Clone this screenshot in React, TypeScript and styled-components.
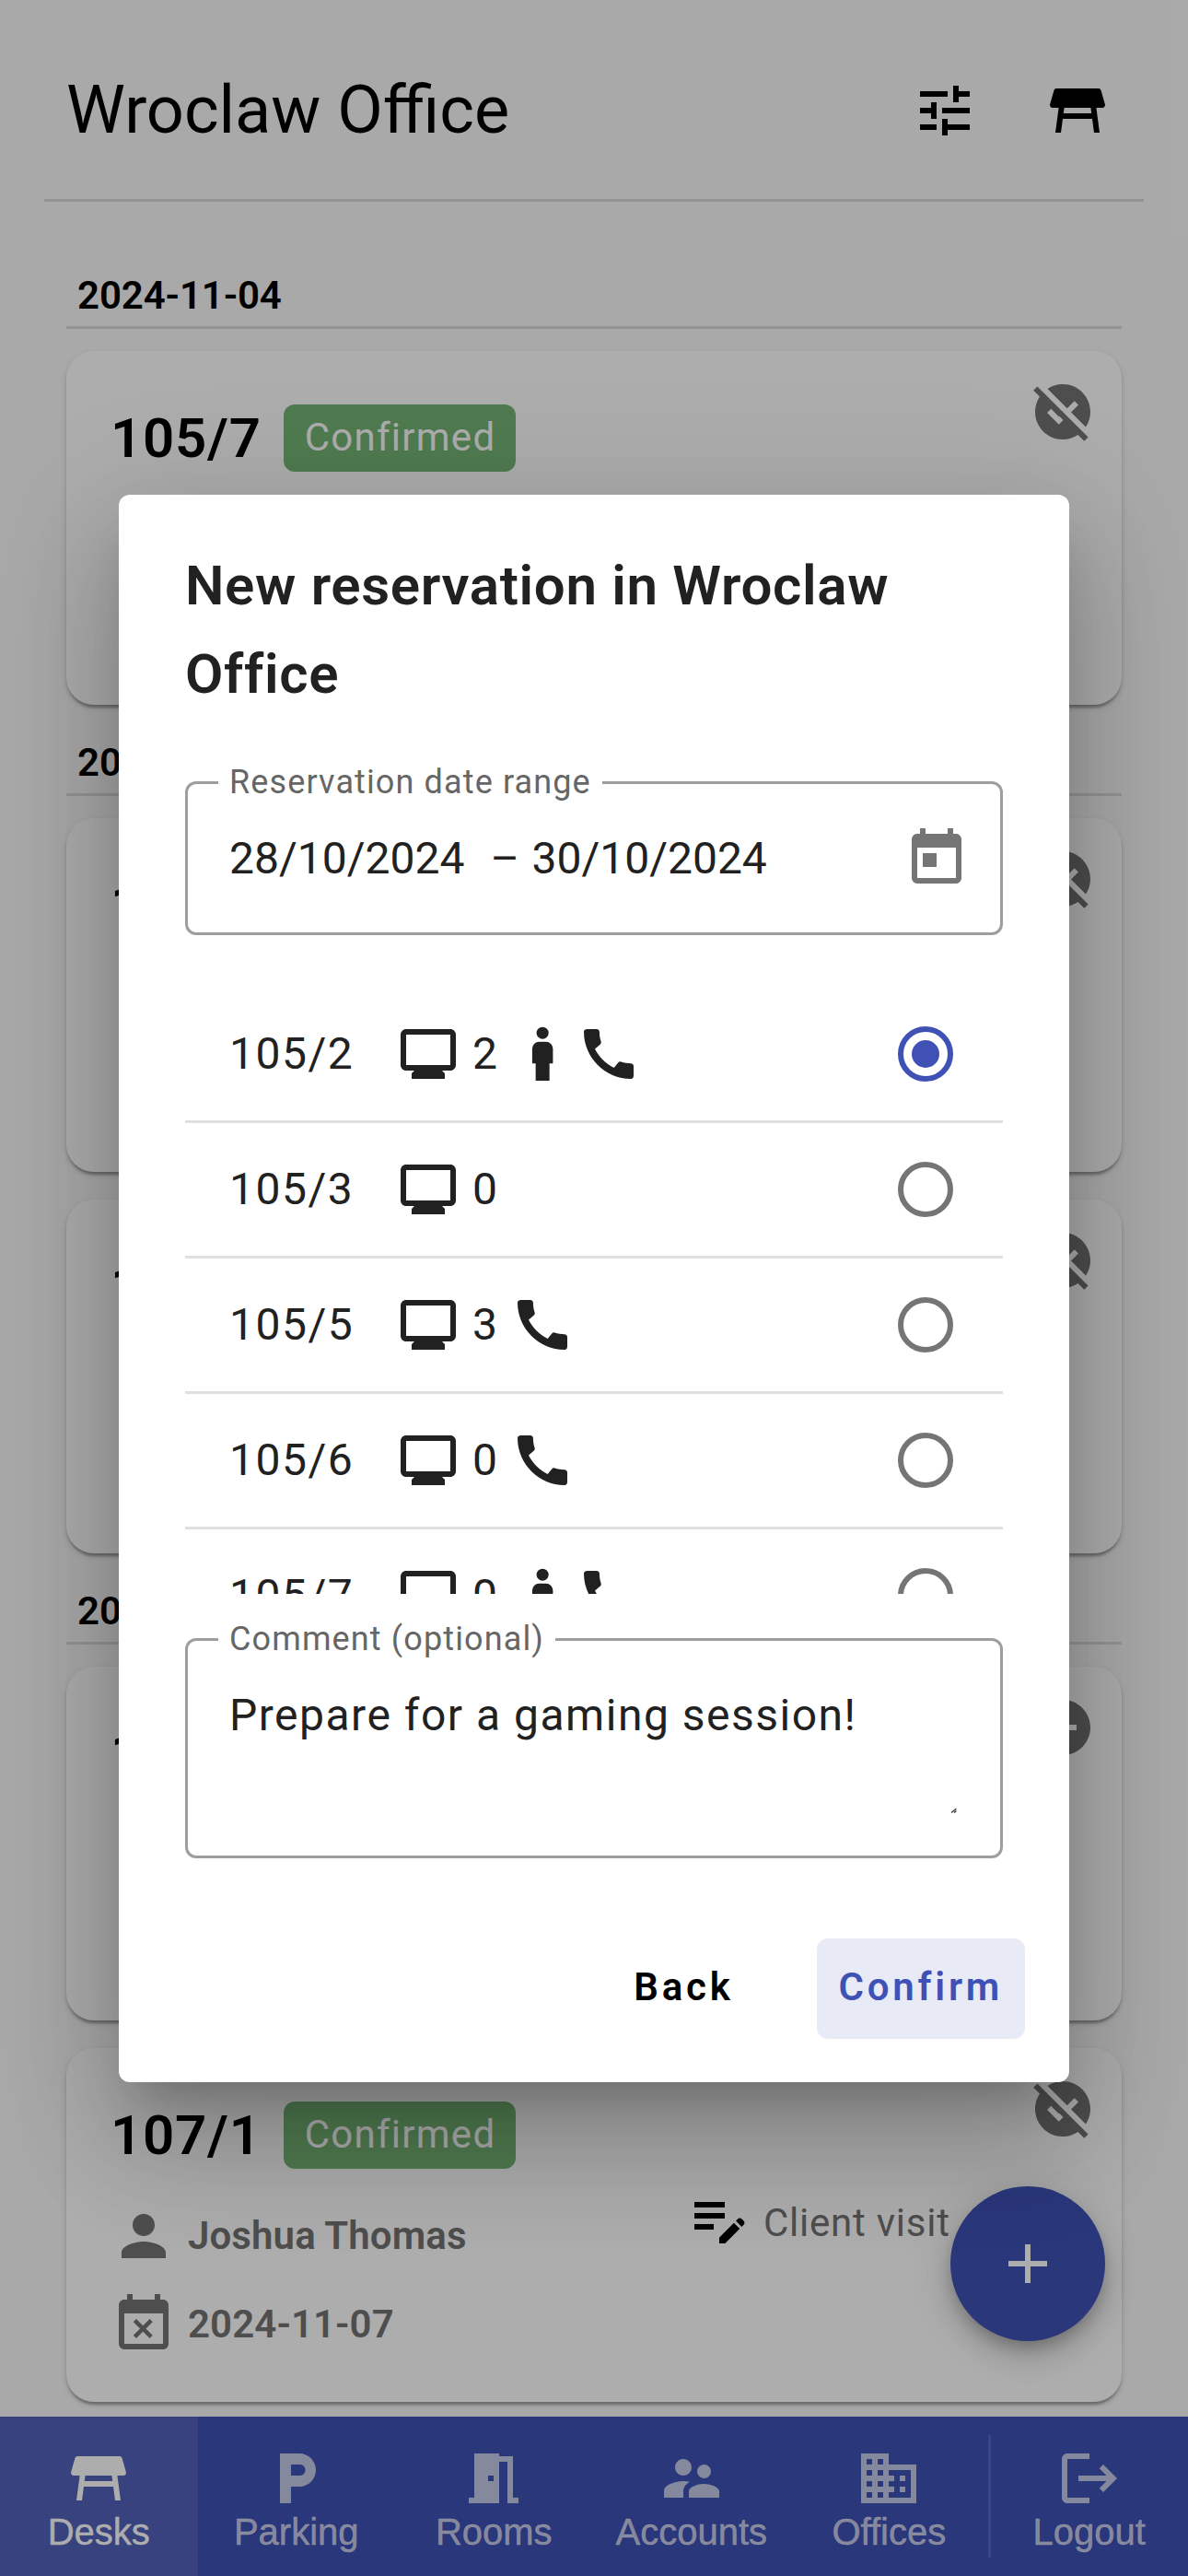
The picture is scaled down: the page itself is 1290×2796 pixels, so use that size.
import React from 'react';
import styled, { createGlobalStyle, css } from 'styled-components';
import {
  MdAdd,
  MdCall,
  MdDomain,
  MdEditNote,
  MdEventBusy,
  MdLocalParking,
  MdMeetingRoom,
  MdMonitor,
  MdPerson,
  MdRemoveCircle,
  MdSupervisorAccount,
  MdTableRestaurant,
  MdToday,
  MdTune,
  MdUnpublished,
} from 'react-icons/md';

const GlobalStyle = createGlobalStyle`
  * { box-sizing: border-box; }
  html, body { margin: 0; padding: 0; background: #fafafa; }
  body { font-family: Roboto, "Noto Sans", sans-serif; color: #000; }
  button { border: 0; background: none; padding: 0; margin: 0; color: inherit; }
  svg { display: block; flex: none; }
`;

const primary = '#3f51b5';

const Screen = styled.div`
  position: relative;
  display: flex;
  flex-direction: column;
  width: 1290px;
  height: 2796px;
  overflow: hidden;
  background: #fafafa;
`;

/* ---------- Page header ---------- */

const Header = styled.header`
  display: flex;
  align-items: center;
  flex: none;
  height: 219px;
  margin: 0 48px;
  padding: 24px 0 0 24px;
  border-bottom: 3px solid rgba(0, 0, 0, 0.12);
`;

const PageTitle = styled.h1`
  flex: 1;
  margin: 0;
  font-size: 72px;
  font-weight: 400;
  line-height: 96px;
`;

const IconButton = styled.button`
  display: grid;
  place-items: center;
  width: 144px;
  height: 144px;
`;

/* ---------- Reservation list ---------- */

const Content = styled.main`
  flex: 1;
  min-height: 0;
  padding: 69px 72px 0;
  overflow: hidden;
`;

const DayHeader = styled.h2`
  display: flex;
  align-items: center;
  height: 69px;
  margin: 0 0 24px;
  padding-left: 12px;
  border-bottom: 3px solid rgba(0, 0, 0, 0.12);
  font-size: 42px;
  font-weight: 600;
  line-height: 48px;
  letter-spacing: -0.1px;
`;

const Card = styled.article`
  position: relative;
  height: 384px;
  margin-bottom: 30px;
  padding: 58px 0 0 48px;
  border-radius: 30px;
  background: #fff;
  box-shadow:
    0 6px 3px -3px rgba(0, 0, 0, 0.2),
    0 3px 3px 0 rgba(0, 0, 0, 0.14),
    0 3px 9px 0 rgba(0, 0, 0, 0.12);
`;

const CardTitle = styled.div`
  display: flex;
  align-items: center;
  gap: 24px;
  height: 73px;
  margin-bottom: 25px;
`;

const DeskName = styled.span`
  padding-top: 1px;
  font-size: 60px;
  font-weight: 600;
  line-height: 72px;
  letter-spacing: 0.0125em;
`;

const Badge = styled.span`
  display: flex;
  align-items: center;
  height: 73px;
  padding: 0 22px 2px 23px;
  border-radius: 12px;
  background: #77b676;
  color: #fff;
  font-size: 42px;
  font-weight: 420;
  line-height: 48px;
  letter-spacing: 0.03em;
`;

const CardCorner = styled.span`
  position: absolute;
  top: 30px;
  right: 28px;
  color: #737373;
`;

const CardBody = styled.div`
  display: grid;
  grid-template-columns: 625px 1fr;
  color: #737373;
  font-size: 42px;
  line-height: 48px;
`;

const Fact = styled.div`
  display: flex;
  align-items: center;
  gap: 12px;
  height: 96px;
  font-weight: 600;
  letter-spacing: 0.1px;
`;

const Note = styled.div`
  display: flex;
  align-items: flex-start;
  gap: 12px;
  margin-top: -7px;
  font-weight: 420;
  letter-spacing: 0.018em;

  svg { color: #000; }
  span { padding-top: 17px; }
`;

const Fab = styled.button`
  position: absolute;
  right: 90px;
  bottom: 255px;
  display: grid;
  place-items: center;
  width: 168px;
  height: 168px;
  border-radius: 50%;
  background: ${primary};
  color: #fff;
  box-shadow:
    0 9px 15px -3px rgba(0, 0, 0, 0.2),
    0 18px 30px 0 rgba(0, 0, 0, 0.14),
    0 3px 54px 0 rgba(0, 0, 0, 0.12);
`;

/* ---------- Bottom navigation ---------- */

const BottomNav = styled.nav`
  display: flex;
  flex: none;
  height: 173px;
  background: ${primary};
`;

const NavItem = styled.button<{ $active?: boolean }>`
  display: flex;
  flex: 1;
  flex-direction: column;
  align-items: center;
  padding-top: 31px;
  color: rgba(255, 255, 255, 0.7);
  font-family: Arial, "Liberation Sans", sans-serif;
  font-size: 40px;
  line-height: 45px;
  -webkit-text-stroke: 0.4px currentColor;
  ${(p) =>
    p.$active &&
    css`
      background: rgba(255, 255, 255, 0.1);
      color: #fff;
    `}
`;

const NavDivider = styled.span`
  width: 3px;
  margin: 20px 0;
  background: rgba(255, 255, 255, 0.12);
`;

/* ---------- Dialog ---------- */

const Backdrop = styled.div`
  position: absolute;
  inset: 0;
  display: flex;
  align-items: center;
  justify-content: center;
  padding-top: 1px;
  background: rgba(0, 0, 0, 0.32);
`;

const Dialog = styled.section`
  display: flex;
  flex-direction: column;
  width: 1032px;
  height: 1723px;
  padding: 51px 72px 47px;
  border-radius: 12px;
  background: #fff;
  color: #212121;
  font-weight: 420;
  box-shadow:
    0 33px 45px -21px rgba(0, 0, 0, 0.2),
    0 72px 114px 9px rgba(0, 0, 0, 0.14),
    0 27px 138px 24px rgba(0, 0, 0, 0.12);
`;

const DialogTitle = styled.h2`
  margin: 0 0 68px;
  font-size: 60px;
  font-weight: 600;
  line-height: 96px;
  letter-spacing: 0.0112em;
`;

const Field = styled.div<{ $height: number }>`
  position: relative;
  display: flex;
  flex: none;
  align-items: center;
  height: ${(p) => p.$height}px;
  padding: 0 33px 0 45px;
  border: 3px solid #9e9e9e;
  border-radius: 12px;
  font-size: 48px;
  line-height: 72px;
  letter-spacing: 0.03125em;
`;

const FieldLabel = styled.label`
  position: absolute;
  top: -26px;
  left: 33px;
  padding: 0 12px;
  background: #fff;
  color: #666;
  font-size: 36px;
  line-height: 48px;
  letter-spacing: 0.03125em;
`;

const DateValue = styled.span`
  letter-spacing: 0;
`;

const Dash = styled.span`
  margin: 0 12px 0 28px;
`;

const CalendarIcon = styled.span`
  margin-left: auto;
  color: #757575;
`;

const DeskList = styled.div`
  flex: none;
  height: 658px;
  margin: 57px 0 48px;
  overflow: hidden;
`;

const DeskRow = styled.div`
  display: flex;
  align-items: center;
  height: 147px;
  padding: 0 54px 0 48px;
  border-bottom: 3px solid #e0e0e0;
  font-size: 48px;
  line-height: 72px;
  letter-spacing: 0.03125em;
`;

const RowName = styled.span`
  width: 180px;
`;

const RowCount = styled.span`
  padding: 0 12px;
`;

const Radio = styled.span<{ $checked?: boolean }>`
  display: grid;
  place-items: center;
  width: 60px;
  height: 60px;
  margin-left: auto;
  border: 6px solid ${(p) => (p.$checked ? primary : '#757575')};
  border-radius: 50%;

  &::after {
    content: '';
    width: 30px;
    height: 30px;
    border-radius: 50%;
    background: ${(p) => (p.$checked ? primary : 'transparent')};
  }
`;

const CommentText = styled.p`
  align-self: flex-start;
  margin: 45px 0 0;
`;

const ResizeGrip = styled.svg`
  align-self: flex-end;
  margin: 0 14px 46px auto;
`;

const Actions = styled.div`
  display: flex;
  justify-content: flex-end;
  gap: 66px;
  margin: auto -24px 0 0;
`;

const ActionButton = styled.button<{ $primary?: boolean }>`
  height: 109px;
  padding: 0 24px 3px;
  border-radius: 12px;
  background: ${(p) => (p.$primary ? 'rgba(63, 81, 181, 0.12)' : 'transparent')};
  color: ${(p) => (p.$primary ? primary : '#000')};
  font-family: Roboto, "Noto Sans", sans-serif;
  font-size: 42px;
  font-weight: 600;
  line-height: 104px;
  letter-spacing: 0.0893em;
`;

/* ---------- Icons missing from the package ---------- */

const StandingPersonIcon = () => (
  <svg width="72" height="72" viewBox="0 0 24 24" fill="currentColor">
    <circle cx="12.05" cy="4.4" r="2.17" />
    <path d="M10.8 7.57h2.5a2.5 2.5 0 0 1 2.5 2.5v5.36h-1.25v6.2h-5v-6.2H8.3v-5.36a2.5 2.5 0 0 1 2.5-2.5z" />
  </svg>
);

const LogoutIcon = () => (
  <svg width="72" height="72" viewBox="0 0 24 24" fill="currentColor">
    <path d="M17 7l-1.41 1.41L18.17 11H8v2h10.17l-2.58 2.58L17 17l5-5M4 5h8V3H4c-1.1 0-2 .9-2 2v14c0 1.1.9 2 2 2h8v-2H4V5z" />
  </svg>
);

/* ---------- Data ---------- */

type Reservation = {
  desk: string;
  person: string;
  until: string;
  note?: string;
  removable?: boolean;
};

const days: { date: string; items: Reservation[] }[] = [
  { date: '2024-11-04', items: [{ desk: '105/7', person: '', until: '' }] },
  {
    date: '2024-11-05',
    items: [
      { desk: '105/2', person: '', until: '' },
      { desk: '105/3', person: '', until: '' },
    ],
  },
  {
    date: '2024-11-07',
    items: [
      { desk: '105/5', person: '', until: '', removable: true },
      { desk: '107/1', person: 'Joshua Thomas', until: '2024-11-07', note: 'Client visit' },
    ],
  },
];

const desks = [
  { name: '105/2', monitors: 2, standing: true, phone: true },
  { name: '105/3', monitors: 0 },
  { name: '105/5', monitors: 3, phone: true },
  { name: '105/6', monitors: 0, phone: true },
  { name: '105/7', monitors: 0, standing: true, phone: true },
];

const navItems = [
  { label: 'Desks', Icon: MdTableRestaurant },
  { label: 'Parking', Icon: MdLocalParking },
  { label: 'Rooms', Icon: MdMeetingRoom },
  { label: 'Accounts', Icon: MdSupervisorAccount },
  { label: 'Offices', Icon: MdDomain },
];

const ReservationCard = ({ desk, person, until, note, removable }: Reservation) => (
  <Card>
    <CardCorner>{removable ? <MdRemoveCircle size={72} /> : <MdUnpublished size={72} />}</CardCorner>
    <CardTitle>
      <DeskName>{desk}</DeskName>
      <Badge>Confirmed</Badge>
    </CardTitle>
    {person && (
      <CardBody>
        <div>
          <Fact>
            <MdPerson size={72} />
            {person}
          </Fact>
          <Fact>
            <MdEventBusy size={72} />
            {until}
          </Fact>
        </div>
        {note && (
          <Note>
            <MdEditNote size={72} />
            <span>{note}</span>
          </Note>
        )}
      </CardBody>
    )}
  </Card>
);

export default function App() {
  return (
    <>
      <GlobalStyle />
      <Screen>
        <Header>
          <PageTitle>Wroclaw Office</PageTitle>
          <IconButton>
            <MdTune size={72} />
          </IconButton>
          <IconButton>
            <MdTableRestaurant size={72} />
          </IconButton>
        </Header>
        <Content>
          {days.map((day) => (
            <section key={day.date}>
              <DayHeader>{day.date}</DayHeader>
              {day.items.map((item) => (
                <ReservationCard key={item.desk} {...item} />
              ))}
            </section>
          ))}
        </Content>
        <BottomNav>
          {navItems.map(({ label, Icon }, i) => (
            <NavItem key={label} $active={i === 0}>
              <Icon size={72} />
              {label}
            </NavItem>
          ))}
          <NavDivider />
          <NavItem>
            <LogoutIcon />
            Logout
          </NavItem>
        </BottomNav>
        <Fab>
          <MdAdd size={72} />
        </Fab>
        <Backdrop>
          <Dialog>
            <DialogTitle>New reservation in Wroclaw Office</DialogTitle>
            <Field $height={167}>
              <FieldLabel>Reservation date range</FieldLabel>
              <DateValue>28/10/2024</DateValue>
              <Dash>–</Dash>
              <DateValue>30/10/2024</DateValue>
              <CalendarIcon>
                <MdToday size={72} />
              </CalendarIcon>
            </Field>
            <DeskList>
              {desks.map((d) => (
                <DeskRow key={d.name}>
                  <RowName>{d.name}</RowName>
                  <MdMonitor size={72} />
                  <RowCount>{d.monitors}</RowCount>
                  {d.standing && <StandingPersonIcon />}
                  {d.phone && <MdCall size={72} />}
                  <Radio $checked={d.name === '105/2'} />
                </DeskRow>
              ))}
            </DeskList>
            <Field $height={239}>
              <FieldLabel>Comment (optional)</FieldLabel>
              <CommentText>Prepare for a gaming session!</CommentText>
              <ResizeGrip width="6" height="5" viewBox="0 0 6 5">
                <path d="M0 4.5L5.5 0M3 4.5L5.5 2.4" stroke="#333" strokeWidth="1.3" />
              </ResizeGrip>
            </Field>
            <Actions>
              <ActionButton>Back</ActionButton>
              <ActionButton $primary>Confirm</ActionButton>
            </Actions>
          </Dialog>
        </Backdrop>
      </Screen>
    </>
  );
}
